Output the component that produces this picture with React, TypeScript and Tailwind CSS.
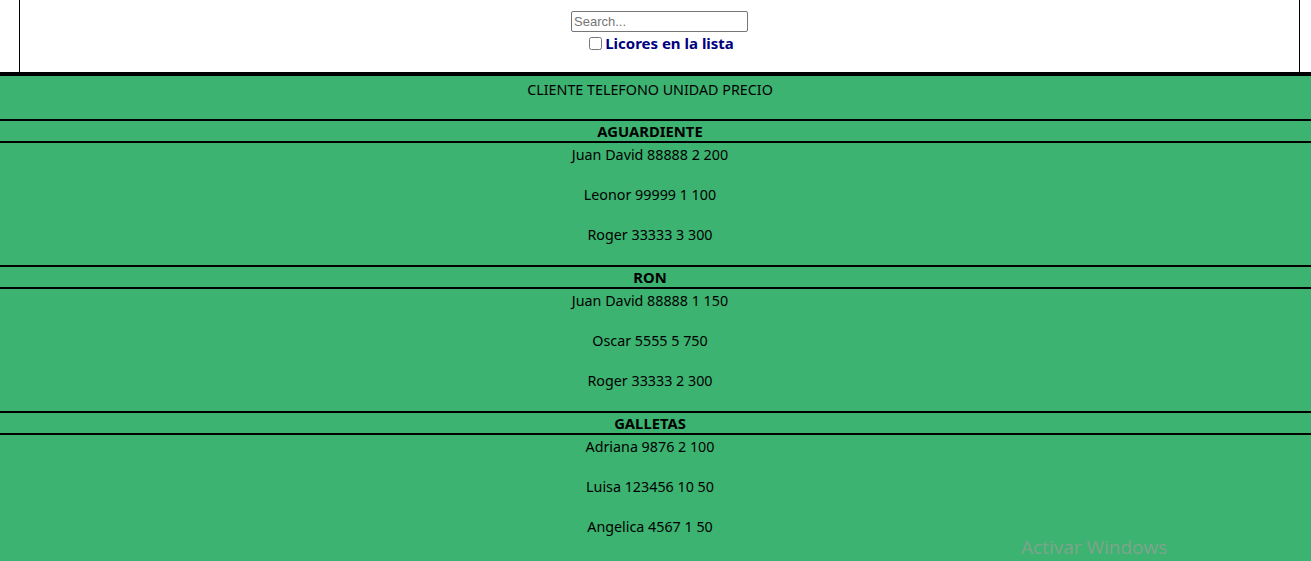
import React from 'react';

const categorias = [
  {
    nombre: 'AGUARDIENTE',
    filas: ['Juan David 88888 2 200', 'Leonor 99999 1 100', 'Roger 33333 3 300'],
  },
  {
    nombre: 'RON',
    filas: ['Juan David 88888 1 150', 'Oscar 5555 5 750', 'Roger 33333 2 300'],
  },
  {
    nombre: 'GALLETAS',
    filas: ['Adriana 9876 2 100', 'Luisa 123456 10 50', 'Angelica 4567 1 50'],
  },
];

const App = () => {
  return (
    <div className="relative min-h-[561px] bg-[#3cb371] font-['Noto_Sans',sans-serif] text-[14.3px] text-black overflow-hidden">
      {/* header */}
      <div className="bg-white">
        <div className="ml-[19px] w-[1281px] h-[72px] border-x border-black bg-white flex flex-col items-center pt-[11px]">
          <input
            type="text"
            placeholder="Search..."
            className="w-[177px] h-[21px] border border-[#767676] rounded-[2px] px-[2px] text-[13px] font-['Liberation_Sans',sans-serif] placeholder:text-[#757575] outline-none"
          />
          <label className="flex items-center mt-[1px] h-[20px] pl-[4px]">
            <input type="checkbox" className="w-[13px] h-[13px] m-0 mr-[3px]" />
            <span className="font-bold text-[#000080] text-[15px]">Licores en la lista</span>
          </label>
        </div>
      </div>
      <div className="h-[4px] bg-black" />

      {/* tabla */}
      <div className="text-center">
        <div className="h-[43px] pt-[2px] pr-[11px] leading-[24px]">CLIENTE TELEFONO UNIDAD PRECIO</div>
        {categorias.map((cat) => (
          <div key={cat.nombre} className="mb-[18px]">
            <div className="border-y-2 border-black h-[24px] pr-[11px] leading-[20px] font-bold text-[14.8px]">{cat.nombre}</div>
            <div className="flex flex-col gap-[16px] pr-[11px]">
              {cat.filas.map((fila) => (
                <div key={fila} className="h-[24px] leading-[24px]">{fila}</div>
              ))}
            </div>
          </div>
        ))}
      </div>

      <div className="absolute left-[1021px] top-[534px] text-[19px] text-[#7fa48c] font-['Open_Sans',sans-serif] leading-[26px]">
        Activar Windows
      </div>
    </div>
  );
};

export default App;
